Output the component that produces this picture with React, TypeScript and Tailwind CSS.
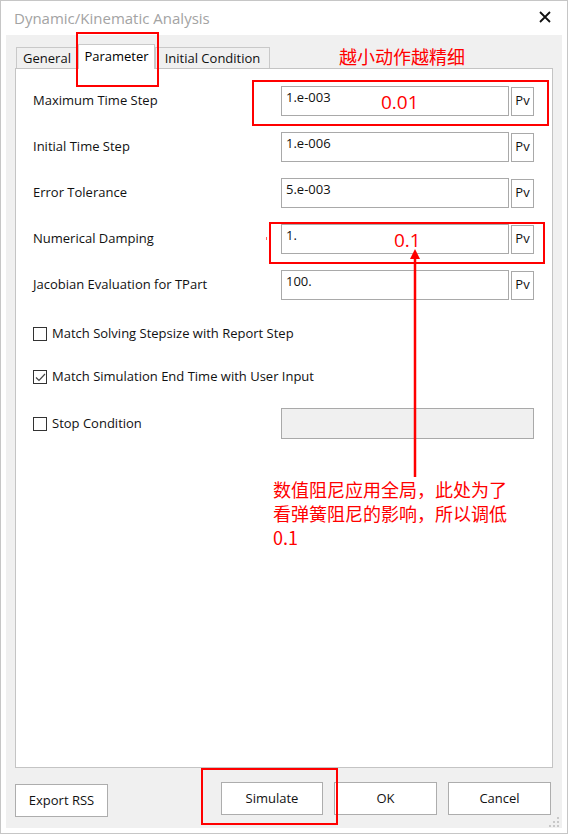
import React from "react";

const ui = "font-['Open_Sans','Noto_Sans',sans-serif]";
const cjk = "font-['Noto_Sans_CJK_SC',sans-serif]";

type Row = { label: string; value: string };

const rows: Row[] = [
  { label: "Maximum Time Step", value: "1.e-003" },
  { label: "Initial Time Step", value: "1.e-006" },
  { label: "Error Tolerance", value: "5.e-003" },
  { label: "Numerical Damping", value: "1." },
  { label: "Jacobian Evaluation for TPart", value: "100." },
];

export default function App() {
  return (
    <div className={`relative h-[834px] w-[568px] overflow-hidden border border-[#c6c6c6] bg-white ${ui}`}>
      {/* title bar */}
      <div className="flex h-[34px] items-center justify-between pl-[13px] pr-[16px]">
        <span className="text-[15px] text-[#a3a3a3]">Dynamic/Kinematic Analysis</span>
        <svg width="12" height="12" viewBox="0 0 12 12" className="mt-[-2px]">
          <path d="M1 1 L11 11 M11 1 L1 11" stroke="#111" strokeWidth="1.8" />
        </svg>
      </div>

      {/* body */}
      <div className="mx-[5px] flex h-[793px] flex-col bg-[#f0f0f0] px-[9px] pt-[9px]">
        <div className="flex h-[24px] items-end pl-[1px]">
          <Tab width="w-[62px]">General</Tab>
          <div className="z-10 -mb-[1px] flex h-[25px] w-[77px] justify-center border border-b-0 border-[#c9c9c9] bg-white pt-[2px] text-[13px] text-black">
            Parameter
          </div>
          <Tab width="w-[115px]">Initial Condition</Tab>
        </div>

        <div className="flex h-[701px] flex-col border border-[#c4c4c4] bg-white pl-[17px] pr-[18px] pt-[17px]">
          <div className="flex flex-col gap-[16px]">
            {rows.map((row) => (
              <div key={row.label} className="flex h-[30px] items-center">
                <span className="w-[248px] text-[13px] text-[#111]">{row.label}</span>
                <div className="h-[30px] w-[228px] border border-[#a9a9a9] bg-white pl-[4px] pt-[1px] text-[13px] leading-[18px] text-[#111]">
                  {row.value}
                </div>
                <button
                  type="button"
                  className="ml-[2px] flex h-[29px] w-[23px] items-center justify-center border border-[#a9a9a9] bg-white text-[13px] text-[#111]"
                >
                  Pv
                </button>
              </div>
            ))}
          </div>

          <div className="mt-[27px] flex h-[14px] items-center">
            <CheckBox checked={false} />
            <span className="ml-[5px] text-[13px] text-[#111]">Match Solving Stepsize with Report Step</span>
          </div>
          <div className="mt-[29px] flex h-[14px] items-center">
            <CheckBox checked />
            <span className="ml-[5px] text-[13px] text-[#111]">Match Simulation End Time with User Input</span>
          </div>
          <div className="mt-[24px] flex h-[31px] items-center">
            <CheckBox checked={false} />
            <span className="ml-[5px] w-[229px] text-[13px] text-[#111]">Stop Condition</span>
            <div className="h-[31px] w-[253px] border border-[#a9a9a9] bg-[#f0f0f0]" />
          </div>
        </div>

        <div className="flex items-start pt-[14px]">
          <Button className="mt-[2px] w-[93px]">Export RSS</Button>
          <Button className="ml-[113px] w-[102px]">Simulate</Button>
          <Button className="ml-[11px] w-[103px]">OK</Button>
          <Button className="ml-[11px] w-[103px]">Cancel</Button>
        </div>
        <div className="-mr-[6px] flex flex-1 items-end justify-end pb-[1px]">
          <Grip />
        </div>
      </div>

      {/* annotations */}
      <div className="absolute left-[75px] top-[31px] h-[55px] w-[83px] border-2 border-[#ff0000]" />
      <div className={`absolute left-[338px] top-[42px] text-[18px] leading-[26px] text-[#ff0000] ${cjk}`}>
        越小动作越精细
      </div>
      <div className="absolute left-[251px] top-[79px] h-[46px] w-[297px] border-2 border-[#ff0000]" />
      <div className="absolute left-[380px] top-[88px] text-[19px] leading-[26px] text-[#ff0000]">0.01</div>
      <div className="absolute left-[268px] top-[221px] h-[42px] w-[276px] border-2 border-[#ff0000]" />
      <div className="absolute left-[393px] top-[226px] text-[19px] leading-[26px] text-[#ff0000]">0.1</div>
      <div className="absolute left-[265px] top-[236px] h-[3px] w-[1px] bg-[#ff6060]" />
      <svg className="absolute left-[405px] top-[248px]" width="18" height="230" viewBox="0 0 18 230">
        <path d="M9 0 L14 10 L4 10 Z" fill="#ff0000" />
        <line x1="9" y1="9" x2="9" y2="228" stroke="#ff0000" strokeWidth="2.5" />
      </svg>
      <div className={`absolute left-[272px] top-[476px] w-[250px] text-[18px] leading-[24px] text-[#ff0000] ${cjk}`}>
        数值阻尼应用全局，此处为了看弹簧阻尼的影响，所以调低0.1
      </div>
      <div className="absolute left-[200px] top-[767px] h-[57px] w-[137px] border-2 border-[#ff0000]" />
    </div>
  );
}

function Tab({ width, children }: { width: string; children: React.ReactNode }) {
  return (
    <div
      className={`flex h-[21px] ${width} items-center justify-center border border-b-0 border-[#c9c9c9] bg-[#f0f0f0] pt-[2px] text-[13px] text-[#111]`}
    >
      {children}
    </div>
  );
}

function CheckBox({ checked }: { checked: boolean }) {
  return (
    <div className="flex h-[14px] w-[14px] shrink-0 items-center justify-center border border-[#333] bg-white">
      {checked && (
        <svg width="11" height="9" viewBox="0 0 11 9">
          <path d="M1 4.5 L4 7.5 L10 1" fill="none" stroke="#444" strokeWidth="1.2" />
        </svg>
      )}
    </div>
  );
}

function Button({ className, children }: { className: string; children: React.ReactNode }) {
  return (
    <button
      type="button"
      className={`flex h-[33px] items-center justify-center border border-[#adadad] bg-white text-[13px] text-[#111] ${className}`}
    >
      {children}
    </button>
  );
}

function Grip() {
  return (
    <svg width="10" height="10" viewBox="0 0 10 10">
      {[
        [8, 0],
        [8, 4],
        [4, 4],
        [8, 8],
        [4, 8],
        [0, 8],
      ].map(([x, y]) => (
        <rect key={`${x}-${y}`} x={x} y={y} width="2" height="2" fill="#c8c8c8" />
      ))}
    </svg>
  );
}
